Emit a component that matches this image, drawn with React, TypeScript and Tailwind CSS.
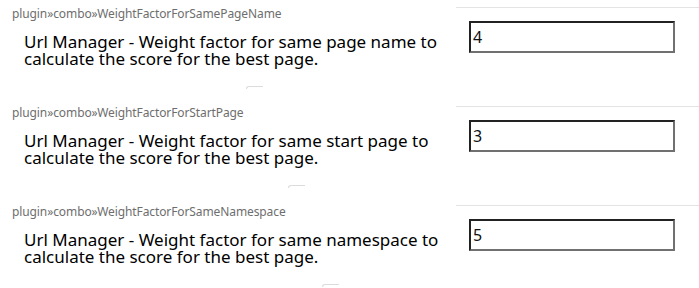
import React from "react";

type Setting = {
  id: string;
  description: string[];
  value: string;
  markClass: string;
};

const settings: Setting[] = [
  {
    id: "plugin»combo»WeightFactorForSamePageName",
    description: [
      "Url Manager - Weight factor for same page name to",
      "calculate the score for the best page.",
    ],
    value: "4",
    markClass: "ml-[246px]",
  },
  {
    id: "plugin»combo»WeightFactorForStartPage",
    description: [
      "Url Manager - Weight factor for same start page to",
      "calculate the score for the best page.",
    ],
    value: "3",
    markClass: "ml-[288px]",
  },
  {
    id: "plugin»combo»WeightFactorForSameNamespace",
    description: [
      "Url Manager - Weight factor for same namespace to",
      "calculate the score for the best page.",
    ],
    value: "5",
    markClass: "ml-[322px]",
  },
];

export default function App(): JSX.Element {
  return (
    <div className="w-[699px] h-[288px] overflow-hidden bg-white pt-[7px] font-['Noto_Sans',sans-serif]">
      {settings.map((s) => (
        <div key={s.id} className="flex h-[99px]">
          <div className="w-[456px] flex flex-col">
            <div className="pl-[12px] text-[12px] leading-[14px] text-[#6e6e6e] tracking-[-0.1px]">
              {s.id}
            </div>
            <div className="pl-[24px] mt-[12px] text-[17px] leading-[17px] text-black">
              {s.description.map((line) => (
                <div key={line} className="whitespace-nowrap">
                  {line}
                </div>
              ))}
            </div>
            <div
              className={`${s.markClass} mt-[19px] w-[17px] h-[3px] border-t border-l border-[#dcdcdc] rounded-tl-[3px]`}
            />
          </div>
          <div className="flex-1 border-t border-[#e3e3e3] pl-[13px] pt-[13px]">
            <input
              readOnly
              defaultValue={s.value}
              className="w-[206px] h-[32px] border-2 border-t-[#222] border-l-[#222] border-b-[#707070] border-r-[#707070] px-[2px] text-[16px] text-[#111] bg-white outline-none font-['Noto_Sans',sans-serif]"
            />
          </div>
        </div>
      ))}
    </div>
  );
}
